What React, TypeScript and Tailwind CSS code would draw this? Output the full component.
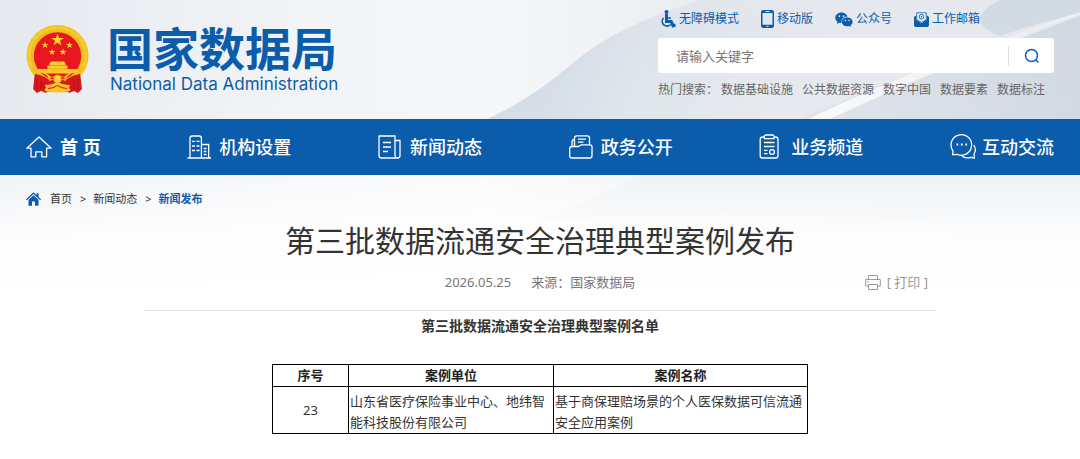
import type { ReactNode } from "react";

const topLinks = [
  { label: "无障碍模式", icon: <AccessIcon /> },
  { label: "移动版", icon: <PhoneIcon /> },
  { label: "公众号", icon: <WechatIcon /> },
  { label: "工作邮箱", icon: <MailIcon /> },
];

const hotWords = ["数据基础设施", "公共数据资源", "数字中国", "数据要素", "数据标注"];

const navItems: { label: string; icon: ReactNode; active?: boolean }[] = [
  {
    label: "首 页",
    active: true,
    icon: <path d="M5 14.200v8.600h4.800v-5h6v5h4.800v-8.600h4.600L13 3 .8 14.200z" />,
  },
  {
    label: "机构设置",
    icon: (
      <>
        <path d="M.5 24H24M3 24V4.200Q3 2 5.200 2h7Q14.400 2 14.400 4.200V24M14.500 10.500h7.200V24" />
        <path d="M5 7.300h3M9.500 7.300h3M5 12h3M9.500 12h3M5 16.500h3M9.500 16.500h3M16.700 14.500h2.800M16.700 17.500h2.800M16.700 20.500h2.800" />
      </>
    ),
  },
  {
    label: "新闻动态",
    icon: (
      <>
        <path d="M17 2H1v19.500Q1 24 3.500 24h16q2.500 0 2.500-2.500V6.500h-5zM17 2v19.500q0 2 2 2.500" />
        <path d="M5 8.500h8M5 13h8M5 17.500h5" />
      </>
    ),
  },
  {
    label: "政务公开",
    icon: (
      <>
        <path d="M3 12V8.500Q3 5.500 5.500 5.500V12.500M5.500 9V4q0-2.200 2.200-2.200h10.600q2.200 0 2.200 2.200v7.200" />
        <path d="M3.100 12.500h6.600l2.700-1.700H21q2 0 2 2v8.900q0 2.300-2.200 2.300H3Q.7 24 .7 21.700V15q0-2.500 2.400-2.500zM9 5.200h8M9 8.200h5.500" />
      </>
    ),
  },
  {
    label: "业务频道",
    icon: (
      <>
        <path d="M5.300 3H3.500Q1.200 3 1.200 5.300v16.400Q1.200 24 3.500 24h13.200q2.300 0 2.300-2.300V5.300Q19 3 16.700 3h-1.600" />
        <path d="M5.300 4.600V2.700Q5.300 1 7 1h6.400q1.700 0 1.700 1.700v1.900zM5 8.500h10.500M5 12.500h10.500M5 16.300h3.500M5 19.600h3.500" />
        <circle cx="13" cy="18" r="2.400" />
      </>
    ),
  },
  {
    label: "互动交流",
    icon: (
      <>
        <path d="M3 17A10.300 10.300 0 1 1 7.500 20.500l-5 .2z" />
        <path d="M23.800 11q3 5 .2 9l.5 4-4-.7q-5.500 2-9.500-2.300" />
        <path d="M6.500 10.500h1.800M10.900 10.500h1.800M15.300 10.500h1.800" strokeWidth="1.800" />
      </>
    ),
  },
];

function AccessIcon() {
  return (
    <svg viewBox="0 0 16 18" className="h-[18px] w-4" aria-hidden>
      <circle cx="6.500" cy="2" r="2" fill="currentColor" />
      <path d="M6.500 4v7.500h4.700l1.800 4.300 2.500-.8" fill="none" stroke="currentColor" strokeWidth="3" />
      <path d="M6.500 8h4.500" stroke="currentColor" strokeWidth="1.500" />
      <path d="M3.500 8a4.800 4.800 0 1 0 7.200 6.500" fill="none" stroke="currentColor" strokeWidth="1.700" />
    </svg>
  );
}

function PhoneIcon() {
  return (
    <svg viewBox="0 0 13 18" className="h-[18px] w-[13px]" aria-hidden>
      <path
        fillRule="evenodd"
        fill="currentColor"
        d="M2.200 0h8.600Q13 0 13 2.200v13.600Q13 18 10.800 18H2.200Q0 18 0 15.800V2.200Q0 0 2.200 0zM1.500 3v11.700h10V3zM4.500 1.100v.9h4v-.9zM5.500 15.800v1h2v-1z"
      />
    </svg>
  );
}

function WechatIcon() {
  return (
    <svg viewBox="0 0 18 15" className="h-[15px] w-[18px]" aria-hidden>
      <path
        fill="currentColor"
        d="M6.500.500C2.900.500.300 2.800.300 5.700c0 1.700.9 3 2.200 4L1.900 12l2.400-1.300q1 .3 2.200.3C5.900 7.300 8.800 4.700 12.500 4.800 11.800 2.300 9.500.500 6.500.500z"
      />
      <path
        fill="currentColor"
        d="M12.200 5.500c-3 0-5.300 2-5.300 4.400s2.300 4.400 5.300 4.400q1 0 1.900-.3l2 1-.5-1.800c1.300-.9 2-2 2-3.300 0-2.400-2.300-4.400-5.400-4.400z"
      />
      <g fill="#e3e8ee">
        <circle cx="4.300" cy="4.200" r=".9" />
        <circle cx="8.500" cy="4.200" r=".9" />
        <circle cx="10.500" cy="8.500" r=".8" />
        <circle cx="14" cy="8.500" r=".8" />
      </g>
    </svg>
  );
}

function MailIcon() {
  return (
    <svg viewBox="0 0 15 15" className="size-[15px]" aria-hidden>
      <path d="M0 5 2 3.500v4l5.500 3.700L13 7.500v-4L15 5v8.300q0 1.700-1.700 1.700H1.700Q0 15 0 13.300z" fill="currentColor" />
      <path d="M2.700 7.500V.8h9.600v6.700l-4.800 3z" fill="#e9eff6" stroke="currentColor" strokeWidth=".8" />
      <circle cx="7.500" cy="4.700" r="2.300" fill="none" stroke="currentColor" strokeWidth=".9" />
      <circle cx="7.500" cy="4.700" r=".8" fill="currentColor" />
    </svg>
  );
}

function Star({ x, y, s }: { x: number; y: number; s: number }) {
  return (
    <path
      transform={`translate(${x} ${y}) scale(${s})`}
      fill="#fcd42d"
      d="M0-10 2.400-3.100 9.500-3.100 3.800 1.200 5.900 8.100 0 4 -5.900 8.100 -3.800 1.200 -9.500-3.100 -2.400-3.100z"
    />
  );
}

function Emblem() {
  return (
    <svg viewBox="0 0 63 68" className="h-[68px] w-[63px]" aria-hidden>
      <ellipse cx="31.500" cy="30.500" rx="31" ry="30.500" fill="#f0bd20" />
      <ellipse cx="31.500" cy="30.500" rx="28.500" ry="28" fill="none" stroke="#f8cc2c" strokeWidth="3" strokeDasharray="6 .6" />
      <path d="M5 42 12 56l39 0 7-14z" fill="#f0bd20" />
      <circle cx="31.500" cy="31" r="23.700" fill="#e9151f" />
      <Star x={31.5} y={15} s={0.66} />
      <Star x={19} y={20} s={0.36} />
      <Star x={43.5} y={20} s={0.36} />
      <Star x={26} y={27} s={0.36} />
      <Star x={37} y={27} s={0.36} />
      <path d="M25 36.500h13l1.500 2v2h2v3.500h9l2 3h-42l2-3h9v-3.500h2v-2z" fill="#fbcf2b" />
      <path d="M23 40.500h17M21 44h21" stroke="#d99213" strokeWidth=".8" />
      <path d="M9 49q11 2 15 7 7-5 15 0 4-5 15-7l1 12-14 6H22L8 60z" fill="#dc1820" />
      <path d="M9 49 7 64l4 4 4-2 5 2 4-6-5-9zM54 49l2 15-4 4-4-2-5 2-4-6 5-9z" fill="#d9161e" />
      <path d="M11 54v11M15 56v8M52 54v11M48 56v8" stroke="#ab1018" strokeWidth="1" />
      <path d="M12 44.500h39q1 1.500-1 3-7 .5-10 6-8-5-17 0-3-5.500-10-6-2-1.500-1-3z" fill="#f9ca28" />
      <path d="M20 48.500h23q-3 1-5 3.500-6-3-13 0-2-2.500-5-3.500z" fill="#e02020" />
      <circle cx="31.500" cy="54" r="4" fill="#fbd435" stroke="#e39a14" strokeWidth=".8" />
      <path d="M19 60q7 0 12.500-3Q37 60 44 60l-1 3q2 1 1 3-7 1.500-12.500 1.500T19 66q-1-2 1-3z" fill="#f8c522" />
      <path d="M22 63.500q5 0 9.500-3 4.500 3 9.500 3" fill="none" stroke="#d4141c" strokeWidth="1" />
    </svg>
  );
}

function Backdrop() {
  return (
    <svg
      viewBox="0 0 1080 300"
      preserveAspectRatio="none"
      className="pointer-events-none absolute inset-x-0 top-0 -z-10 h-[300px] w-full"
      aria-hidden
    >
      <defs>
        <linearGradient id="base" x1="0" y1="0" x2="1" y2="0">
          <stop offset="0" stopColor="#e5e9ee" />
          <stop offset=".28" stopColor="#f2f4f7" />
          <stop offset=".45" stopColor="#f6f7f9" />
          <stop offset=".62" stopColor="#eceff2" />
          <stop offset="1" stopColor="#e6eaef" />
        </linearGradient>
        <linearGradient id="arc" x1="560" y1="50" x2="760" y2="130" gradientUnits="userSpaceOnUse">
          <stop offset="0" stopColor="#d3dce6" />
          <stop offset=".4" stopColor="#dfe5eb" />
          <stop offset="1" stopColor="#e5e9ee" />
        </linearGradient>
        <linearGradient id="corner" x1="0" y1="0" x2="1" y2="0">
          <stop offset="0" stopColor="#dfe4ea" />
          <stop offset="1" stopColor="#d0d8e1" />
        </linearGradient>
        <linearGradient id="ray" x1="0" y1="0" x2="1" y2="0">
          <stop offset="0" stopColor="#fff" stopOpacity=".8" />
          <stop offset="1" stopColor="#fff" stopOpacity=".45" />
        </linearGradient>
        <linearGradient id="fade" x1="0" y1="0" x2="0" y2="1">
          <stop offset="0" stopColor="#fff" stopOpacity="0" />
          <stop offset=".4" stopColor="#fff" stopOpacity=".05" />
          <stop offset=".58" stopColor="#fff" stopOpacity=".45" />
          <stop offset=".78" stopColor="#fff" stopOpacity=".88" />
          <stop offset="1" stopColor="#fff" />
        </linearGradient>
        <pattern id="dots" width="3" height="3" patternUnits="userSpaceOnUse">
          <circle cx="1" cy="1" r=".6" fill="#c9d3df" />
        </pattern>
      </defs>
      <path d="M0 0h1080v300H0z" fill="url(#base)" />
      <path d="M487 119Q530 100 573 63T700 0h380v119z" fill="url(#arc)" />
      <path d="M800 119Q890 80 960 55T1080 14v105z" fill="url(#corner)" />
      <path d="M1000 36Q960 20 1000 0h80v13Q1040 22 1000 36z" fill="#cdd7e1" fillOpacity=".8" />
      <path d="M808 119Q890 80 960 55T1080 12v4Q1030 34 970 58T830 119z" fill="url(#ray)" />
      <path d="M650 20l50-12 70 8 50 18-20 30-50 10-40 10-30 34-20-30-20-34z" fill="url(#dots)" fillOpacity=".4" />
      <path d="M540 220Q590 200 640 175h440v60q-260-30-540-15z" fill="#dfe5eb" fillOpacity=".7" />
      <path d="M0 0h1080v300H0z" fill="url(#fade)" />
    </svg>
  );
}

function Header() {
  return (
    <header className="flex h-[119px] items-start justify-between px-[26px]">
      <a href="#" className="mt-6 flex items-center gap-[18px] text-[#0b5cab]">
        <Emblem />
        <span className="flex flex-col gap-0.5">
          <span className="text-[46px] leading-[48px] font-bold">国家数据局</span>
          <span className="pl-[3px] font-[Inter,sans-serif] text-[17px] leading-5">National Data Administration</span>
        </span>
      </a>

      <div className="w-[396px]">
        <div className="flex h-[38px] items-center gap-[22px] pl-0.5 text-xs text-[#0b5cab]">
          {topLinks.map((link) => (
            <a key={link.label} href="#" className="flex items-center gap-[3px]">
              {link.icon}
              {link.label}
            </a>
          ))}
        </div>
        <form className="flex h-[35px] items-center rounded-[3px] bg-white">
          <input
            type="text"
            aria-label="请输入关键字"
            placeholder="请输入关键字"
            className="h-full min-w-0 flex-1 pl-[18px] text-[13px] text-[#333] outline-none placeholder:text-[#757575]"
          />
          <button
            type="button"
            aria-label="搜索"
            className="flex h-5 w-[46px] items-center justify-center border-l border-[#ddd] text-[#0b5cab]"
          >
            <svg viewBox="0 0 16 16" className="size-4" fill="none" stroke="currentColor" strokeWidth="1.500" aria-hidden>
              <circle cx="7.500" cy="7.500" r="6" />
              <path d="m11.500 11.700 3 2.800" />
            </svg>
          </button>
        </form>
        <div className="flex items-center gap-[9px] pt-[7px] text-xs leading-5 whitespace-nowrap text-[#666]">
          <span className="-mr-[6px] w-[60px]">热门搜索：</span>
          {hotWords.map((word) => (
            <a key={word} href="#">
              {word}
            </a>
          ))}
        </div>
      </div>
    </header>
  );
}

function Nav() {
  return (
    <nav className="flex h-14 items-center justify-between bg-[#0b5cab] px-[26px] text-white">
      {navItems.map((item) => (
        <a
          key={item.label}
          href="#"
          className={`flex items-center text-lg ${item.active ? "gap-2 font-bold" : "gap-1.5 font-medium"}`}
        >
          <svg
            viewBox="0 0 26 26"
            className="size-[26px]"
            fill="none"
            stroke="currentColor"
            strokeWidth="1.300"
            strokeLinejoin="round"
            aria-hidden
          >
            {item.icon}
          </svg>
          {item.label}
        </a>
      ))}
    </nav>
  );
}

function Breadcrumb() {
  return (
    <div className="flex h-12 items-center px-[26px] text-[11px] text-[#333]">
      <svg viewBox="0 0 15 14" className="mr-[9px] h-[14px] w-[15px] text-[#0b5cab]" aria-hidden>
        <path d="M0 7.300 7.500.300l3 2.700V1.200h2v3.700L15 7.300l-.8.9L7.500 2 .8 8.200z" fill="currentColor" />
        <path d="m2.500 7.700 5-4.500 5 4.500v6H9V9.500H6v4.200H2.500z" fill="currentColor" />
      </svg>
      <a href="#">首页</a>
      <span className="mr-[7px] ml-2">&gt;</span>
      <a href="#">新闻动态</a>
      <span className="mr-[7px] ml-2">&gt;</span>
      <a href="#" className="font-bold text-[#0b5cab]">
        新闻发布
      </a>
    </div>
  );
}

export default function App() {
  return (
    <div className="relative isolate min-h-screen bg-white font-['Noto_Sans','Noto_Sans_CJK_SC',sans-serif]">
      <Backdrop />
      <Header />
      <Nav />
      <Breadcrumb />

      <main className="mx-auto max-w-[792px] text-[#333]">
        <h1 className="text-center text-3xl leading-9 font-normal">第三批数据流通安全治理典型案例发布</h1>
        <div className="mt-[13px] grid grid-cols-[1fr_auto_1fr] items-center border-b border-[#e3e3e3] pb-[18px] text-[13px] leading-5 text-[#777]">
          <span />
          <p className="flex gap-5">
            <span>2026.05.25</span>
            <span>来源：国家数据局</span>
          </p>
          <button type="button" className="mr-2 flex items-center gap-[6px] justify-self-end text-[#999]">
            <svg viewBox="0 0 16 15" className="h-[15px] w-4" fill="none" stroke="currentColor" aria-hidden>
              <path d="M3.500 4.500v-4h9v4M3.500 11H.700V4.500h14.600V11h-2.800M3.500 9.500h9v5h-9zM2.500 6.700h1.500" />
            </svg>
            [ 打印 ]
          </button>
        </div>

        <h2 className="mt-1 text-center text-sm leading-[22px] font-bold">第三批数据流通安全治理典型案例名单</h2>

        <table className="mx-auto mt-[27px] w-[536px] table-fixed border-collapse text-[13px] leading-[21px]">
          <colgroup>
            <col className="w-[76px]" />
            <col className="w-[205px]" />
            <col />
          </colgroup>
          <thead>
            <tr className="text-[#222]">
              <th className="border border-black">序号</th>
              <th className="border border-black">案例单位</th>
              <th className="border border-black">案例名称</th>
            </tr>
          </thead>
          <tbody>
            <tr>
              <td className="border border-black text-center">23</td>
              <td className="border border-black px-px pt-1">山东省医疗保险事业中心、地纬智能科技股份有限公司</td>
              <td className="border border-black px-px pt-1">基于商保理赔场景的个人医保数据可信流通安全应用案例</td>
            </tr>
          </tbody>
        </table>
      </main>
    </div>
  );
}
